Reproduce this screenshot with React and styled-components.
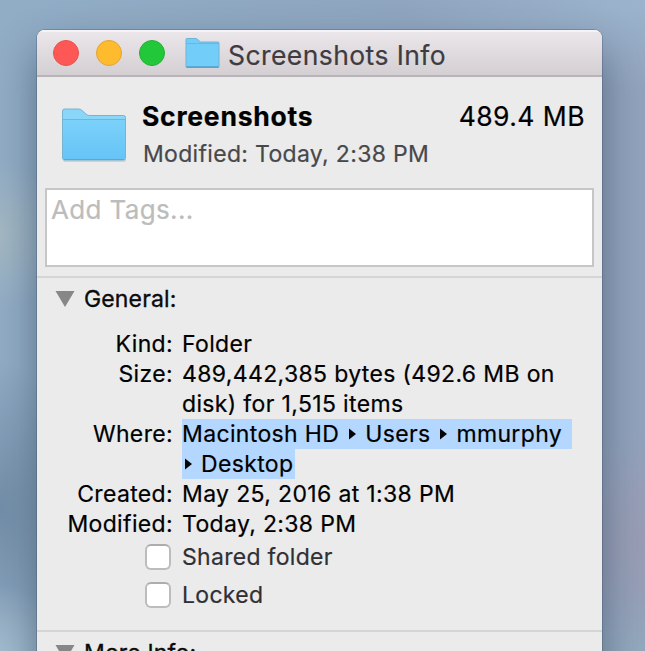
import React from "react";
import styled, { createGlobalStyle } from "styled-components";

const GlobalStyle = createGlobalStyle`
  * { box-sizing: border-box; }
  body { margin: 0; font-family: Inter, "Liberation Sans", sans-serif; }
`;

const Desktop = styled.main`
  width: 645px;
  height: 651px;
  padding: 30px 43px 0 37px;
  overflow: hidden;
  background:
    radial-gradient(ellipse 60px 75px at 0 235px, #a4b8c3 0%, #a4b8c300 100%),
    radial-gradient(ellipse 70px 80px at 0 665px, #a6bfcf 0%, #a6bfcf00 100%),
    radial-gradient(ellipse 80px 150px at 0 510px, #738ea8 0%, #738ea800 100%),
    radial-gradient(ellipse 80px 110px at 645px 540px, #9a9db4 0%, #9a9db400 100%),
    radial-gradient(ellipse 90px 70px at 645px 660px, #93abbd 0%, #93abbd00 100%),
    radial-gradient(ellipse 240px 90px at 645px 0, #9bb4cd 0%, #9bb4cd00 100%),
    linear-gradient(90deg, #91adc6 0%, #8fa7c1 45%, #92a3bd 100%);
`;

const Window = styled.section`
  height: 700px;
  border-radius: 8px 8px 0 0;
  overflow: hidden;
  background: #ebebeb;
  box-shadow: 0 0 0 1px rgba(60, 75, 95, 0.3), 0 20px 42px rgba(15, 30, 50, 0.42);
`;

const TitleBar = styled.header`
  display: flex;
  align-items: center;
  height: 47px;
  padding-left: 16px;
  background: linear-gradient(#ebe7eb, #d3cfd3);
  border-bottom: 2px solid #b7b3b7;
  box-shadow: inset 0 2px #f5f3f5;
`;

const Lights = styled.div`
  display: flex;
  gap: 17px;
  margin-right: 20px;
`;

const Light = styled.span`
  width: 26px;
  height: 26px;
  border-radius: 50%;
  background: ${(p) => p.$fill};
  border: 1.5px solid ${(p) => p.$edge};
`;

const Title = styled.h1`
  margin: 4px 0 0 8px;
  font-size: 26.5px;
  line-height: 32px;
  font-weight: 400;
  letter-spacing: 0.42px;
  color: #3f3b40;
  -webkit-text-stroke: 0.2px;
`;

const Summary = styled.div`
  display: flex;
  height: 111px;
  padding: 23px 17px 0 24px;
`;

const SummaryText = styled.div`
  flex: 1;
  padding-left: 15px;
`;

const Name = styled.div`
  display: flex;
  justify-content: space-between;
  font-size: 26.5px;
  line-height: 32px;
  letter-spacing: 0.45px;
  color: #000;
  -webkit-text-stroke: 0.2px;
`;

const Bold = styled.strong`
  font-weight: 700;
  letter-spacing: 0.75px;
`;

const Modified = styled.div`
  margin-top: 7px;
  padding-left: 1px;
  font-size: 23px;
  line-height: 30px;
  letter-spacing: 0.32px;
  color: #48484a;
  -webkit-text-stroke: 0.2px;
`;

const TagBox = styled.div`
  height: 79px;
  margin: 0 8px 9px;
  padding: 3px 4px;
  border: 2px solid #c6c6c6;
  background: #fff;
  font-size: 26px;
  line-height: 33px;
  letter-spacing: 0.35px;
  color: #bcbcbc;
  -webkit-text-stroke: 0.2px;
`;

const Section = styled.section`
  border-top: 2px solid #d5d5d5;
`;

const SectionHead = styled.h2`
  display: flex;
  align-items: center;
  height: 30px;
  margin: 6px 0 0 18px;
  gap: 9px;
  font-size: 23px;
  line-height: 30px;
  font-weight: 400;
  letter-spacing: 0.15px;
  color: #0b0b0b;
  -webkit-text-stroke: 0.35px;
`;

const Details = styled.dl`
  display: grid;
  grid-template-columns: 136px 1fr;
  column-gap: 9px;
  margin: 14.5px 0 0;
  font-size: 23px;
  line-height: 30px;
  letter-spacing: 0.35px;
  color: #000;
  -webkit-text-stroke: 0.2px;
`;

const Label = styled.dt`
  text-align: right;
  white-space: nowrap;
`;

const Value = styled.dd`
  margin: 0;
  white-space: nowrap;
`;

const Line = styled.span`
  display: block;
`;

const Selected = styled.span`
  display: flex;
  align-items: center;
  gap: 7px;
  width: ${(p) => p.$width}px;
  height: 30px;
  background: #b3d7ff;
`;

const Checks = styled.div`
  display: grid;
  row-gap: 8px;
  margin: 3.5px 0 20px 108px;
`;

const Check = styled.label`
  display: flex;
  align-items: center;
  gap: 11px;
  height: 30px;
  font-size: 23px;
  line-height: 30px;
  letter-spacing: 0.3px;
  color: #303034;
  -webkit-text-stroke: 0.2px;
`;

const Box = styled.span`
  width: 26px;
  height: 26px;
  border: 2px solid #bcbcbc;
  border-top-color: #adadad;
  border-radius: 6px;
  background: #fff;
`;

function BigFolder() {
  return (
    <svg width="66" height="64" viewBox="0 -1 66 64">
      <defs>
        <linearGradient id="bigFront" x1="0" y1="0" x2="0" y2="1">
          <stop offset="0" stopColor="#7bd1fa" />
          <stop offset="1" stopColor="#66c4f6" />
        </linearGradient>
      </defs>
      <rect x="2" y="56" width="63" height="5" rx="2" fill="#d0d3d5" />
      <path d="M1.5 57V10Q1.5 8 3.500 8H17.500Q19.500 8 20.800 9.200L25 13.100Q26.500 14.500 28.500 14.500H62.500Q64.500 14.500 64.500 16.500V57Q64.500 59 62.500 59H3.500Q1.500 59 1.500 57Z" fill="#8ad6f9" stroke="#78b4d2" />
      <path d="M2 18.500H64V56.500Q64 58 62.500 58H3.500Q2 58 2 56.500Z" fill="url(#bigFront)" />
      <path d="M2 18.500H64" stroke="#65b9e5" />
      <path d="M3 58.500H63" stroke="#59a9d2" />
    </svg>
  );
}

function SmallFolder() {
  return (
    <svg width="35" height="32" viewBox="0 0 35 32">
      <path d="M1 29.500V2.500Q1 1.500 2 1.500H11.500L15.500 5H33Q34 5 34 6V29.500Q34 30.500 33 30.500H2Q1 30.500 1 29.500Z" fill="#72cef8" stroke="#70b3d4" />
      <path d="M1.500 6.500H33.500" stroke="#63b9e4" />
      <path d="M1.500 30H33.500" stroke="#529fc9" strokeWidth="1.500" />
    </svg>
  );
}

function Disclosure() {
  return (
    <svg width="20" height="16" viewBox="0 0 20 16">
      <path d="M0.500 0H19.500L10 16Z" fill="#878787" />
    </svg>
  );
}

const ArrowSlot = styled.svg`
  flex: none;
  margin: 1px 2px 0 3px;
`;

function PathArrow() {
  return (
    <ArrowSlot width="7" height="12" viewBox="0 0 7 12">
      <path d="M0 0.500L7 6L0 11.500Z" fill="#050505" />
    </ArrowSlot>
  );
}

export default function App() {
  return (
    <>
      <GlobalStyle />
      <Desktop>
        <Window>
          <TitleBar>
            <Lights>
              <Light $fill="#fd5855" $edge="#e7504b" />
              <Light $fill="#febb2d" $edge="#e5a331" />
              <Light $fill="#23c73a" $edge="#24ae36" />
            </Lights>
            <SmallFolder />
            <Title>Screenshots Info</Title>
          </TitleBar>
          <Summary>
            <BigFolder />
            <SummaryText>
              <Name>
                <Bold>Screenshots</Bold>
                <span>489.4 MB</span>
              </Name>
              <Modified>Modified: Today, 2:38 PM</Modified>
            </SummaryText>
          </Summary>
          <TagBox>Add Tags...</TagBox>
          <Section>
            <SectionHead><Disclosure />General:</SectionHead>
            <Details>
              <Label>Kind:</Label>
              <Value>Folder</Value>
              <Label>Size:</Label>
              <Value>
                <Line>489,442,385 bytes (492.6 MB on</Line>
                <Line>disk) for 1,515 items</Line>
              </Value>
              <Label>Where:</Label>
              <Value>
                <Selected $width={390}>
                  <span>Macintosh HD</span><PathArrow />
                  <span>Users</span><PathArrow />
                  <span>mmurphy</span>
                </Selected>
                <Selected $width={113}>
                  <PathArrow />
                  <span>Desktop</span>
                </Selected>
              </Value>
              <Label>Created:</Label>
              <Value>May 25, 2016 at 1:38 PM</Value>
              <Label>Modified:</Label>
              <Value>Today, 2:38 PM</Value>
            </Details>
            <Checks>
              <Check><Box />Shared folder</Check>
              <Check><Box />Locked</Check>
            </Checks>
          </Section>
          <Section>
            <SectionHead><Disclosure />More Info:</SectionHead>
          </Section>
        </Window>
      </Desktop>
    </>
  );
}
